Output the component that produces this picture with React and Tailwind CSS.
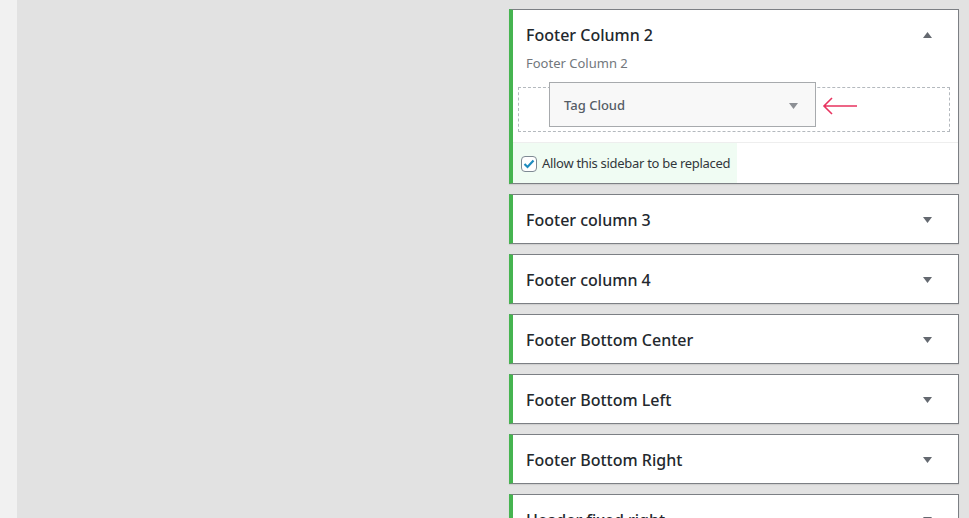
import React from "react";

const CLOSED = [
  "Footer column 3",
  "Footer column 4",
  "Footer Bottom Center",
  "Footer Bottom Left",
  "Footer Bottom Right",
  "Header fixed right",
];

const Caret = ({ up = false, color = "#646970" }) => (
  <svg width="9" height="6" viewBox="0 0 9 6" className="shrink-0">
    <polygon points={up ? "0,6 9,6 4.5,0" : "0,0 9,0 4.5,6"} fill={color} />
  </svg>
);

const Panel = ({ children }) => (
  <div className="w-[450px] shrink-0 bg-white border border-[#7c7f84] border-l-4 border-l-[#46b450] shadow-[0_1px_1px_rgba(0,0,0,0.08)]">
    {children}
  </div>
);

const ClosedPanel = ({ title }) => (
  <Panel>
    <div className="h-12 pt-[2px] flex items-center justify-between pl-[13px] pr-[26px]">
      <h3 className="text-[16px] font-medium text-[#23282d]">{title}</h3>
      <Caret />
    </div>
  </Panel>
);

export default function App() {
  return (
    <div
      className="h-screen flex overflow-hidden"
      style={{ fontFamily: '"Noto Sans", "Open Sans", sans-serif' }}
    >
      <div className="w-[17px] shrink-0 bg-[#f1f1f1]"></div>
      <div className="flex-1 bg-[#e2e2e2] pl-[492px] pt-[9px] flex flex-col gap-[10px]">
        <Panel>
          <div className="flex items-center justify-between pl-[13px] pr-[26px] pt-[13px]">
            <h3 className="text-[16px] leading-6 font-medium text-[#23282d]">Footer Column 2</h3>
            <Caret up />
          </div>
          <p className="pl-[13px] mt-[6px] text-[13px] leading-5 text-[#72777c]">Footer Column 2</p>
          <div className="relative ml-[5px] mr-[8px] mt-[14px] h-[45px] border border-dashed border-[#b4b9be]">
            <div className="ml-[30px] -mt-[6px] w-[267px] h-[45px] pt-[2px] bg-[#f8f8f8] border border-[#a7aaad] flex items-center justify-between pl-[14px] pr-[17px]">
              <span className="text-[13px] font-medium text-[#555d66]">Tag Cloud</span>
              <Caret color="#8c8f94" />
            </div>
            <svg
              className="absolute left-[303px] top-[9px]"
              width="36"
              height="18"
              viewBox="0 0 36 18"
              fill="none"
              stroke="#e8335f"
              strokeWidth="1.6"
            >
              <path d="M35 9H2M10 1L2 9l8 8" />
            </svg>
          </div>
          <div className="mt-[10px] border-t border-[#eeeeee] h-[41px] flex">
            <label className="bg-[#f0fcf3] flex items-center pl-[8px] pr-[7px] pt-[2px] gap-[5px] whitespace-nowrap">
              <span className="w-4 h-4 shrink-0 rounded-[4px] border border-[#7e8993] bg-white flex items-center justify-center">
                <svg width="12" height="10" viewBox="0 0 12 10" fill="none" stroke="#1e8cbe" strokeWidth="2.2">
                  <path d="M1.5 5l3 3 6-6.5" />
                </svg>
              </span>
              <span className="text-[13px] tracking-[-0.3px] text-[#32373c]">Allow this sidebar to be replaced</span>
            </label>
          </div>
        </Panel>
        {CLOSED.map((t) => (
          <ClosedPanel key={t} title={t} />
        ))}
      </div>
    </div>
  );
}
